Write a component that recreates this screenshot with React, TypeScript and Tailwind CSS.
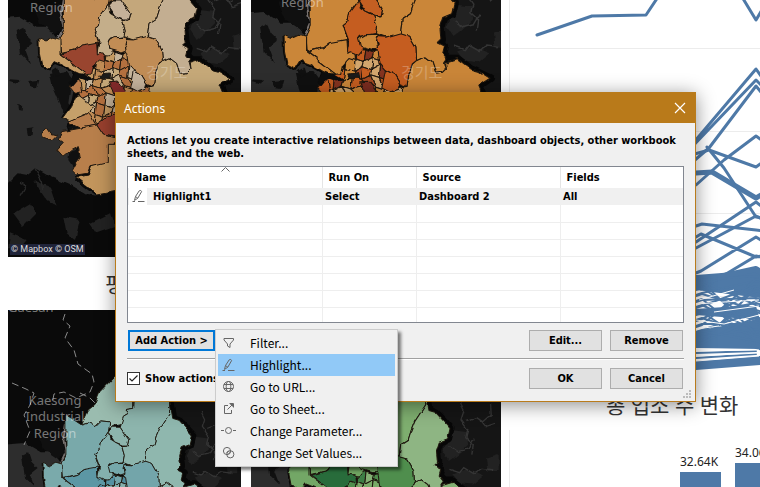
import React, { useState } from "react";

type Palette = { name: string; transform: string; height: number; width: number; fills: Record<string, string>; city: string[] };

/* Districts of the province, drawn from back to front. */
const districts: [string, string][] = [
  ["farEast", "487,185 510,175 530,190 540,220 562,218 570,210 568,190 600,180 640,210 660,215 692,235 660,255 675,290 640,400 400,400 340,330 370,270 460,258 465,225 475,195"],
  ["north", "346,-163 298,-113 280,-70 261,-55 240,-7 262,-14 282,-2 300,-20 330,-17 322,8 350,-8 368,-12 373,-35 390,-45 380,-56 406,-60 406,-120"],
  ["west", "190,-40 240,-7 262,-14 282,-2 300,-20 330,-17 325,15 300,50 295,75 282,85 295,125 275,135 245,135 225,150 182,160 178,115 190,90"],
  ["centre", "325,15 300,50 295,75 282,85 297,125 290,165 325,168 340,150 325,125 330,118 372,110 376,90 368,62 355,55 330,40"],
  ["middle", "373,-35 390,-45 380,-56 406,-60 410,-130 520,-120 520,-44 488,5 478,30 470,55 447,70 442,110 400,120 372,110 376,90 368,62 385,60 390,40 362,0"],
  ["small", "335,0 362,0 390,40 385,60 370,60 345,50 325,20"],
  ["east", "520,-85 520,-44 488,5 478,30 470,55 447,70 442,110 465,115 485,150 487,185 510,175 530,190 540,220 562,218 570,210 565,190 572,180 560,165 565,145 545,135 555,125 552,90 560,65 585,55 592,25 570,0 550,-22 530,-28"],
  ["blob", "372,118 400,120 442,108 465,115 485,150 487,185 475,195 465,225 460,258 440,250 425,225 400,212 385,195 380,160 365,150 380,140"],
  ["cap", "325,125 345,113 380,112 375,130 378,150 365,155 330,145"],
  ["grey", "400,212 425,225 440,250 435,268 415,275 390,262"],
  ["wedge", "182,162 225,150 245,135 290,127 292,165 300,160 312,165 314,185 298,180 280,200 275,222 262,224"],
  ["peninsula", "117,115 135,123 160,112 180,118 180,162 262,224 240,222 225,215 190,195 165,185 150,208 125,195 118,160"],
  ["port", "220,235 240,240 245,275 225,280 210,262"],
  ["shore", "235,285 255,300 285,320 262,340 210,362 190,355 215,320 228,290"],
  ["strip", "200,365 262,340 270,350 280,370 295,375 240,385"],
  ["crimson", "328,245 352,243 378,275 350,300 340,270"],
  ["brick", "290,375 320,350 350,345 350,412 310,405"],
  ["south", "240,385 290,375 310,405 350,415 330,450 325,470 345,495 270,500 262,520 230,525 215,510 225,490 240,470 235,440 215,450 190,470 172,450 190,430 175,420 185,395"],
  ["foot", "230,532 265,525 275,500 325,488 325,430 360,430 370,570 290,585 265,560"],
  ["isle", "125,400 140,385 150,400 170,405 155,420 130,412"],
];

const cityRows: [number, number][] = [[3, 5], [2, 5], [1, 6], [0, 6], [0, 7], [0, 7], [1, 7], [1, 6]];

function corner(col: number, row: number): string {
  const dx = ((col * 37 + row * 53) % 19) - 9;
  const dy = ((col * 71 + row * 29) % 21) - 10;
  return `${235 + col * 26 + dx},${153 + row * 27 + dy}`;
}

const cityCells = cityRows.flatMap(([from, to], row) =>
  Array.from({ length: to - from + 1 }, (_, i) => {
    const col = from + i;
    return { points: [corner(col, row), corner(col + 1, row), corner(col + 1, row + 1), corner(col, row + 1)].join(" "), tone: (col * 5 + row * 7 + ((col * row) % 3)) % 6 };
  })
);

const palettes: Record<string, Palette> = {
  sand: {
    name: "sand", width: 233, height: 257, transform: "translate(-8 0) scale(0.3333)",
    fills: { farEast: "#c5a878", north: "#c28d55", west: "#c28d55", centre: "#c4ae8a", middle: "#c4a77b", small: "#c5b199", east: "#c3ae91", blob: "#c08c55", cap: "#c28d55", grey: "#c5b39c", wedge: "#99452f", peninsula: "#c79d66", port: "#b87a4a", shore: "#c5a06a", strip: "#b87e4c", crimson: "#822a2a", brick: "#99402e", south: "#b87f4b", foot: "#c2955c", isle: "#b87f4b" },
    city: ["#c5a878", "#c08c55", "#c5b399", "#c49a62", "#b4703f", "#c4ae8a"],
  },
  orange: {
    name: "orange", width: 250, height: 257, transform: "translate(-8.9 -5.9) scale(0.3583)",
    fills: { farEast: "#c98538", north: "#ca8639", west: "#ca8639", centre: "#c55d20", middle: "#ca8639", small: "#c45f22", east: "#ca8639", blob: "#c55d20", cap: "#ca8639", grey: "#c55d20", wedge: "#ca8639", peninsula: "#ca8639", port: "#c55d20", shore: "#ca8639", strip: "#c55d20", crimson: "#7b2d20", brick: "#c55d20", south: "#ca8639", foot: "#ca8639", isle: "#ca8639" },
    city: ["#c55d20", "#ca8639", "#84331f", "#c55d20", "#d2a66d", "#a34a22"],
  },
  teal: {
    name: "teal", width: 233, height: 177, transform: "translate(-1.8 117.2) scale(0.3143)",
    fills: { farEast: "#8db5ac", north: "#9abcaf", west: "#79a9aa", centre: "#84b0ad", middle: "#8db5ad", small: "#8db5ad", east: "#8fb7ae", blob: "#73a5aa", cap: "#75a8ab", grey: "#84b0ad", wedge: "#5c97a4", peninsula: "#7aaaab", port: "#4d899b" },
    city: ["#5c97a4", "#4d899b", "#73a5aa", "#5692a2", "#84b0ad", "#487f93"],
  },
  green: {
    name: "green", width: 250, height: 177, transform: "translate(-2.2 110) scale(0.34)",
    fills: { farEast: "#83b073", north: "#79aa68", west: "#6fa461", centre: "#6fa461", middle: "#7eae6f", small: "#79aa68", east: "#8eb583", blob: "#4f8e4d", cap: "#6fa461", grey: "#6fa461", wedge: "#286c3b", peninsula: "#73a766", port: "#4f8e4d" },
    city: ["#6fa461", "#4f8e4d", "#83b073", "#3d7e45", "#79aa68", "#6fa461"],
  },
};

function DistrictMap({ palette, children }: { palette: Palette; children?: React.ReactNode }) {
  const rough = `rough-${palette.name}`;
  return (
    <svg className="block h-full w-full bg-[#0a0a0a]" viewBox={`0 0 ${palette.width} ${palette.height}`} preserveAspectRatio="xMinYMin slice" role="img" aria-label={`${palette.name} map`}>
      <defs>
        <filter id={rough} x="-10%" y="-10%" width="120%" height="120%" colorInterpolationFilters="sRGB">
          <feTurbulence type="fractalNoise" baseFrequency="0.1" numOctaves="2" seed="4" />
          <feDisplacementMap in="SourceGraphic" scale="5" xChannelSelector="R" yChannelSelector="G" />
        </filter>
      </defs>
      <g filter={`url(#${rough})`}>
        <g transform={palette.transform}>
          <polygon fill="#151515" points="480,-300 800,-300 800,800 560,800 500,400" />
          <polygon fill="#2d2d2d" points="0,55 60,50 110,80 150,80 185,130 230,225 215,300 200,380 240,480 225,540 290,590 260,585 210,555 150,530 105,505 80,525 50,520 0,570" />
          <g fill="#101010">
            <polygon points="50,90 70,80 80,110 100,130 75,150 90,190 60,160" />
            <polygon points="150,225 200,215 215,235 205,310 215,325 190,340 160,270" />
            <polygon points="30,238 58,240 50,252 28,246" />
            <polygon points="85,243 115,240 108,265 92,262" />
            <polygon points="80,385 100,382 98,405 84,408" />
            <polygon points="55,315 70,318 68,332 57,330" />
            <polygon points="205,380 235,372 240,392 212,398" />
            <polygon points="208,455 240,445 235,490 222,505 205,480" />
            <polygon points="155,215 172,205 178,225 160,235" />
            <polygon points="100,20 150,25 180,10 184,90 165,100 120,70" />
          </g>
          <g fill="#222222">
            <polygon points="570,90 600,30 640,35 645,70 615,100 590,120" />
            <polygon points="600,160 640,145 690,165 660,190 620,185" />
            <polygon points="700,110 735,100 735,150 705,150" />
            <polygon points="40,640 90,610 110,640 70,680" />
            <polygon points="100,540 150,560 170,620 140,600" />
            <polygon points="190,650 240,660 225,720 200,700" />
            <polygon points="270,670 330,640 345,680 290,700" />
            <polygon points="30,700 80,720 60,745 24,745" />
          </g>
          <g fill="none" stroke="#353535" strokeWidth="4">
            <path d="M620,-50l12,25l-8,25l20,28l-6,24l22,20l-4,30M640,5l30,-12l18,12l25,-22l-2,-30M680,0l15,20l30,-10M590,75l25,18l30,-8l18,-30" />
            <path d="M590,145l30,10l12,-15l30,18l24,-16l30,4" />
            <path d="M105,505l22,40l4,28M60,590l20,-35l-20,-8" stroke="#292929" />
          </g>
          <g fill="none" stroke="#070707" strokeWidth="22" strokeLinejoin="round">
            <path d="M524,-80L533,-28L552,-20L572,0L594,25L587,55L562,65L554,90L558,125L550,135L567,145L562,165L575,180L600,180L640,210L692,235L662,255L677,290" />
            <path d="M117,117L118,160L125,197L150,210L166,187L190,197L225,217L215,250L230,285L190,355" strokeWidth="8" />
          </g>
          <path d="M190,-10L182,40L190,80L172,120" fill="none" stroke="#77716f" strokeWidth="6" />
          <g stroke="#20180f" strokeWidth="3" strokeLinejoin="round">
            <polygon points={districts[0][1]} fill={palette.fills.farEast} />
            {cityCells.map((c, i) => <polygon key={i} points={c.points} fill={palette.city[c.tone]} />)}
            <polygon points="295,226 325,222 328,234 300,236" fill="#1b1b1b" />
            {districts.slice(1).filter(([id]) => palette.fills[id]).map(([id, points]) => (
              <polygon key={id} points={points} fill={palette.fills[id]} />
            ))}
          </g>
          <polygon points="225,218 255,222 285,240 265,244 240,235 228,245 214,262 208,245" fill="#0d0d0d" />
        </g>
      </g>
      {children}
    </svg>
  );
}

const mapLabel = "fill-white/45 font-['Noto_Sans'] text-[13px]";
const mapHangul = "fill-white/25 font-['Noto_Sans_CJK_KR',sans-serif] text-[15px]";

function TrendChart() {
  const strands = Array.from({ length: 24 }, (_, i) => {
    const left = 280 + ((i * 31) % 68);
    const right = 276 + ((i * 43) % 74);
    return `M175,${left + 6}L193,${left}L247,${right}L263,${right + 5}`;
  });
  return (
    <svg className="block h-[385px] w-full" viewBox="0 0 251 385" preserveAspectRatio="xMinYMin slice" role="img" aria-label="Trend by district">
      <path d="M0.5,0V385M0,48.5H251M0,131.5H251M0,213.5H251M0,296.5H251" stroke="#ececec" fill="none" />
      <polygon points="187,275 251,270 251,298 187,290" fill="#4e79a7" />
      <polygon points="187,309 215,307 247,306 251,320 187,315" fill="#4e79a7" />
      <polygon points="187,331 251,319 251,349 187,348" fill="#4e79a7" />
      <polygon points="187,361 251,356 251,365 187,370" fill="#4e79a7" />
      <g fill="none" stroke="#4e79a7" strokeWidth="3" strokeLinejoin="round" strokeLinecap="round">
        <path d="M28,35L83,16L137,15L155,-12M230,-8L247,20L260,-2" />
        <path d="M180,148L247,69L257,83M180,150L247,80L257,90M180,165L200,148L247,86L257,98" />
        <path d="M182,155L200,150L247,167L257,160M198,147L215,168L247,217L257,218M187,185L215,160L247,136L257,143" />
        <path d="M187,173L203,172L247,198L257,192" strokeWidth="5" />
        <path d="M187,242L247,202L257,210M187,248L247,216L257,221M187,226L193,224L247,230L257,231" />
        <path d="M187,237L192,234L247,257L257,255M187,273L192,271L247,237L257,243M192,289L247,256L257,258" />
        <path d="M187,284L215,276L247,269L257,275" strokeWidth="6" />
        {strands.map((d, i) => <path key={i} d={d} strokeWidth="2" />)}
        <path d="M187,353L247,351M187,358L247,354" strokeWidth="2" />
      </g>
      <path d="M187,304L215,302L250,300M187,320L215,324L250,315M187,329L210,326M187,351L250,350M187,356L250,353M187,361L250,356M190,300L225,290M205,312L250,306" fill="none" stroke="#ffffff" strokeWidth="1" />
    </svg>
  );
}

const iconProps = { width: 16, height: 16, viewBox: "0 0 16 16", fill: "none", stroke: "currentColor", "aria-hidden": true } as const;

function PenIcon() {
  return (
    <svg {...iconProps}>
      <path d="M4.5 8.5L8.2 2.8Q10 1.6 10.6 3.6L6.8 10.2L3.5 12.4ZM4.5 8.5L6.8 10.2M1.5 13.5H4M7 13.5H13.5" />
    </svg>
  );
}

const menuItems: { label: string; icon: React.ReactNode }[] = [
  { label: "Filter...", icon: <svg {...iconProps}><path d="M3 3.5H12.5V5L9 9V12.5L6.5 11V9L3 5Z" /></svg> },
  { label: "Highlight...", icon: <PenIcon /> },
  { label: "Go to URL...", icon: <svg {...iconProps}><circle cx="7.5" cy="7.5" r="5" /><ellipse cx="7.5" cy="7.5" rx="2.3" ry="5" /><path d="M3 5.5H12M3 9.5H12" /></svg> },
  { label: "Go to Sheet...", icon: <svg {...iconProps}><path d="M7 4.5H3.5V12.5H10.5V9M6.5 8.5L11.5 3.5M8.5 2.5H12.5V6.5" /><path d="M9.5 3H12V5.5Z" fill="currentColor" /></svg> },
  { label: "Change Parameter...", icon: <svg {...iconProps}><circle cx="7.5" cy="7.5" r="3" /><path d="M0 7.5H3M12 7.5H15" /></svg> },
  { label: "Change Set Values...", icon: <svg {...iconProps}><circle cx="6" cy="6" r="3.6" /><circle cx="9.3" cy="9.3" r="3.6" /><path d="M5.5 8L8 5.5M7 9.5L9.5 7" /></svg> },
];

const columns = ["Name", "Run On", "Source", "Fields"];
const buttonClass = "h-[21px] w-[73px] border border-[#adadad] bg-[#e1e1e1] text-center leading-[17px]";

function ActionsTable() {
  return (
    <div className="mt-[6px] h-[157px] overflow-hidden border border-[#828790] bg-white">
      <table className="w-full table-fixed border-collapse text-left">
        <colgroup>
          <col className="w-[194px]" />
          <col className="w-[94px]" />
          <col className="w-[144px]" />
          <col />
        </colgroup>
        <thead>
          <tr className="h-[21px]">
            {columns.map((c, i) => (
              <th key={c} scope="col" className="relative border-r border-[#e5e5e5] p-0 pl-[6px] font-bold last:border-r-0">
                {c}
                {i === 0 && (
                  <svg className="absolute top-0 left-[93px]" width="9" height="5" viewBox="0 0 9 5" fill="none" stroke="#666" aria-hidden="true"><path d="M0.5 4.5L4.5 0.5L8.5 4.5" /></svg>
                )}
              </th>
            ))}
          </tr>
        </thead>
        <tbody>
          <tr className="h-[17px] bg-[#f0f0f0]">
            <td className="p-0">
              <span className="flex h-[17px] items-center gap-[6px] pl-px">
                <span className="flex h-[17px] w-[18px] justify-end bg-white text-[#666]"><PenIcon /></span>
                Highlight1
              </span>
            </td>
            <td className="p-0 pl-[3px]">Select</td>
            <td className="p-0 pl-[3px]">Dashboard 2</td>
            <td className="p-0 pl-[3px]">All</td>
          </tr>
          {[1, 2, 3, 4, 5, 6, 7].map((r) => (
            <tr key={r} className="h-[17px]">
              {columns.map((c) => <td key={c} className="border-r border-b border-[#eeeeee] p-0 last:border-r-0" />)}
            </tr>
          ))}
        </tbody>
      </table>
    </div>
  );
}

function ActionsDialog() {
  const [shown, setShown] = useState(true);
  return (
    <section role="dialog" aria-labelledby="dialog-title" className="absolute top-[92px] left-[115px] w-[581px] border border-[#b97b1c] bg-[#f0f0f0] font-['DejaVu_Sans_Condensed','Noto_Sans',sans-serif] text-[11px] leading-[13px] font-bold text-black shadow-[0_3px_18px_rgba(0,0,0,0.45)]">
      <header className="flex h-[30px] items-center justify-between bg-[#b97a1a] pr-[9px] pl-2 text-white">
        <h1 id="dialog-title" className="font-['Noto_Sans',sans-serif] text-[12px] font-normal">Actions</h1>
        <button type="button" aria-label="Close">
          <svg width="12" height="12" viewBox="0 0 12 12" fill="none" stroke="currentColor" strokeWidth="1.2"><path d="M1 1L11 11M11 1L1 11" /></svg>
        </button>
      </header>
      <div className="px-[11px] pt-[11px] pb-3">
        <p>Actions let you create interactive relationships between data, dashboard objects, other workbook sheets, and the web.</p>
        <ActionsTable />
        <div className="mt-[7px] flex gap-2 pr-px pl-px">
          <button type="button" className="h-[21px] w-[87px] border-2 border-[#0078d7] bg-[#e1e1e1] leading-[15px]">Add Action &gt;</button>
          <button type="button" className={`${buttonClass} ml-auto`}>Edit...</button>
          <button type="button" className={buttonClass}>Remove</button>
        </div>
        <hr className="mt-[7px] h-[2px] border-t border-b border-t-[#a0a0a0] border-b-white" />
        <div className="mt-2 flex items-center gap-2 pr-px">
          <label className="flex items-center gap-[5px]">
            <span className="grid">
              <input type="checkbox" checked={shown} onChange={(e) => setShown(e.target.checked)} className="peer col-start-1 row-start-1 size-[13px] appearance-none border border-[#333] bg-white" />
              <svg className="pointer-events-none invisible col-start-1 row-start-1 size-[13px] peer-checked:visible" viewBox="0 0 13 13" fill="none" stroke="#222" strokeWidth="1.2"><path d="M2.5 6.5L5 9L10.5 3.5" /></svg>
            </span>
            Show actions for all sheets
          </label>
          <button type="button" className={`${buttonClass} ml-auto`}>OK</button>
          <button type="button" className={buttonClass}>Cancel</button>
        </div>
      </div>
      <svg className="absolute right-[3px] bottom-[2px]" width="9" height="9" viewBox="0 0 9 9" fill="#bcbcbc" aria-hidden="true"><path d="M6 0h2v2h-2zM3 3h2v2h-2zM6 3h2v2h-2zM0 6h2v2h-2zM3 6h2v2h-2zM6 6h2v2h-2z" /></svg>
    </section>
  );
}

function ActionMenu() {
  return (
    <ul role="menu" className="absolute top-[329px] left-[215px] w-[183px] border border-[#cccccc] bg-[#f0f0f0] p-[2px] font-['Noto_Sans_CJK_KR',sans-serif] text-[12px] text-black shadow-[3px_3px_3px_rgba(0,0,0,0.5)]">
      {menuItems.map(({ label, icon }, i) => (
        <li key={label} role="none">
          <button type="button" role="menuitem" className={`flex h-[22px] w-full items-center gap-[13px] pl-[3px] text-left ${i === 1 ? "bg-[#91c9f7]" : ""}`}>
            <span className="text-[#666]">{icon}</span>
            {label}
          </button>
        </li>
      ))}
    </ul>
  );
}

const bars = [
  { label: "32.64K", height: 15 },
  { label: "34.06K", height: 24 },
];

export default function App() {
  return (
    <main className="relative flex h-screen overflow-hidden bg-white pl-2 font-['Noto_Sans','Noto_Sans_CJK_KR',sans-serif]">
      <div className="grid min-w-0 flex-[493] basis-0 grid-cols-[233fr_250fr] grid-rows-[257px_53px_1fr] gap-x-[10px]">
        <div className="relative min-w-0">
          <DistrictMap palette={palettes.sand}>
            <text x="22" y="12" className={mapLabel}>Region</text>
            <text x="138" y="78" className={mapHangul}>경기도</text>
          </DistrictMap>
          <small className="absolute bottom-[2px] left-[2px] bg-[#20243a] px-px font-['Roboto',sans-serif] text-[9px] leading-[11px] text-[#dddddd]">© Mapbox © OSM</small>
        </div>
        <div className="min-w-0">
          <DistrictMap palette={palettes.orange}>
            <text x="30" y="7" className={mapLabel}>Region</text>
            <text x="150" y="78" className={mapHangul}>경기도</text>
          </DistrictMap>
        </div>
        <h2 className="pt-[12px] text-center text-[21px] leading-[30px] text-[#333]">평균</h2>
        <span />
        <div className="min-h-0 min-w-0">
          <DistrictMap palette={palettes.teal}>
            <path d="M57,4l-2,6l7,6l-5,12l9,12l4,14l14,10l2,8l-4,10l-14,6l-12,-6l-10,2l-2,10M4,73l14,6l8,4l-4,12l-6,10l6,16l-6,14M72,83l10,5l8,8" fill="none" stroke="#8a8a8a" strokeWidth="1" strokeDasharray="7 4" />
            <text x="0" y="2" className={mapLabel}>Gaesan</text>
            <text x="47" y="95" textAnchor="middle" className={mapLabel}>Kaesong</text>
            <text x="47" y="111" textAnchor="middle" className={mapLabel}>Industrial</text>
            <text x="47" y="128" textAnchor="middle" className={mapLabel}>Region</text>
          </DistrictMap>
        </div>
        <div className="min-h-0 min-w-0">
          <DistrictMap palette={palettes.green} />
        </div>
      </div>
      <div className="ml-2 flex min-w-0 flex-[251] basis-0 flex-col overflow-hidden">
        <TrendChart />
        <h2 className="h-[45px] pt-[5px] pl-[97px] text-[21px] leading-[30px] whitespace-nowrap text-[#333]">총 업소 수 변화</h2>
        <div className="flex flex-1 items-end gap-[14px] border-l border-[#ececec] pl-[170px]">
          {bars.map((b) => (
            <div key={b.label} className="w-[41px] shrink-0 text-[12px] leading-[20px] text-[#222]">
              {b.label}
              <div className="bg-[#4e79a7]" style={{ height: b.height }} />
            </div>
          ))}
        </div>
      </div>
      <ActionsDialog />
      <ActionMenu />
    </main>
  );
}
